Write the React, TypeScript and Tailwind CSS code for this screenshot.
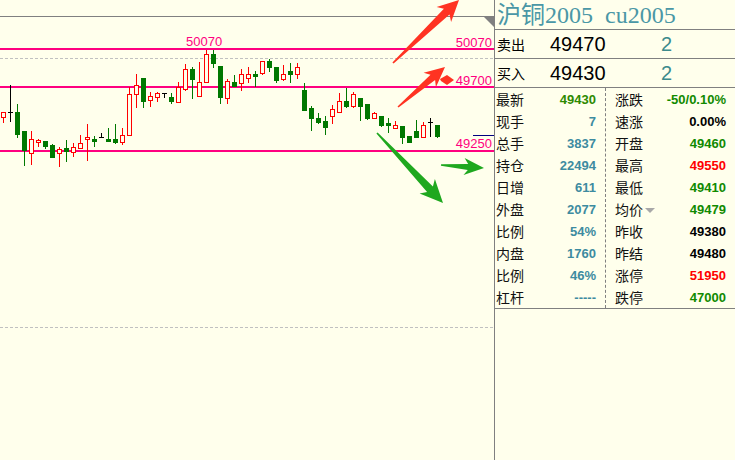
import React from "react";

type Kind = "r" | "g" | "k";
// [high, low, bodyTop, bodyBottom, kind] in chart pixel rows
type Candle = [number, number, number, number, Kind];

const candles: Candle[] = [
  [112, 122, 112, 117, "r"],
  [85, 121, 112, 112, "k"],
  [104, 137, 112, 134, "g"],
  [131, 165, 131, 150, "g"],
  [131, 164, 139, 153, "r"],
  [139, 146, 140, 142, "r"],
  [141, 148, 141, 146, "g"],
  [144, 157, 145, 157, "g"],
  [147, 166, 149, 153, "r"],
  [140, 161, 148, 151, "g"],
  [143, 156, 147, 152, "r"],
  [135, 148, 143, 148, "r"],
  [124, 160, 137, 139, "r"],
  [136, 146, 139, 141, "g"],
  [133, 137, 137, 137, "k"],
  [128, 141, 139, 141, "g"],
  [124, 143, 139, 142, "g"],
  [128, 144, 135, 142, "r"],
  [87, 135, 94, 135, "r"],
  [74, 107, 85, 94, "r"],
  [78, 107, 78, 101, "g"],
  [92, 106, 96, 100, "r"],
  [92, 101, 93, 97, "r"],
  [93, 97, 93, 93, "k"],
  [93, 103, 97, 101, "g"],
  [82, 102, 87, 102, "r"],
  [64, 90, 69, 89, "r"],
  [67, 98, 69, 79, "g"],
  [62, 96, 82, 96, "r"],
  [50, 82, 54, 82, "r"],
  [50, 67, 54, 63, "g"],
  [66, 103, 66, 97, "g"],
  [79, 103, 81, 98, "r"],
  [75, 86, 82, 86, "g"],
  [69, 90, 74, 83, "r"],
  [67, 82, 74, 78, "r"],
  [71, 86, 74, 76, "g"],
  [61, 74, 61, 73, "r"],
  [59, 71, 61, 67, "g"],
  [67, 82, 67, 80, "g"],
  [65, 80, 74, 79, "r"],
  [63, 82, 71, 74, "g"],
  [63, 78, 67, 74, "r"],
  [83, 110, 90, 110, "g"],
  [106, 130, 108, 118, "g"],
  [113, 123, 118, 122, "g"],
  [116, 134, 121, 127, "g"],
  [105, 123, 109, 116, "r"],
  [93, 112, 101, 112, "r"],
  [88, 107, 101, 106, "g"],
  [92, 107, 94, 106, "r"],
  [98, 120, 98, 106, "g"],
  [104, 119, 104, 118, "g"],
  [112, 118, 113, 118, "r"],
  [116, 126, 116, 125, "g"],
  [118, 132, 123, 125, "g"],
  [121, 128, 125, 128, "r"],
  [126, 143, 126, 137, "g"],
  [136, 142, 136, 142, "g"],
  [120, 137, 131, 137, "g"],
  [122, 137, 125, 137, "r"],
  [118, 136, 122, 122, "k"],
  [125, 137, 125, 136, "g"],
];

const BG = "#ffffec";
const PINK = "#ff0080";

// tapered hand-drawn style arrow
function arrow(tx: number, ty: number, hx: number, hy: number, headLen: number, headW: number, shaftW: number) {
  const dx = hx - tx;
  const dy = hy - ty;
  const len = Math.hypot(dx, dy);
  const ux = dx / len;
  const uy = dy / len;
  const nx = -uy;
  const ny = ux;
  const bx = hx - ux * headLen;
  const by = hy - uy * headLen;
  const pts = [
    [tx + nx * 0.8, ty + ny * 0.8],
    [bx + nx * shaftW / 2, by + ny * shaftW / 2],
    [bx + nx * headW / 2 - ux * 4, by + ny * headW / 2 - uy * 4],
    [hx, hy],
    [bx - nx * headW / 2 - ux * 4, by - ny * headW / 2 - uy * 4],
    [bx - nx * shaftW / 2, by - ny * shaftW / 2],
    [tx - nx * 0.8, ty - ny * 0.8],
  ];
  return pts.map((p) => p[0].toFixed(1) + "," + p[1].toFixed(1)).join(" ");
}

function CandleMark({ c, i }: { c: Candle; i: number }) {
  const [hi, lo, top, bot, kind] = c;
  const x0 = 1 + 7 * i;
  const cx = x0 + 2.5;
  if (kind === "k") {
    return (
      <g stroke="#000" strokeWidth={1}>
        <line x1={cx} y1={hi} x2={cx} y2={lo + 1} />
        <line x1={x0} y1={top + 0.5} x2={x0 + 5} y2={top + 0.5} />
      </g>
    );
  }
  if (kind === "g") {
    return (
      <g>
        <line x1={cx} y1={hi} x2={cx} y2={lo + 1} stroke="#007800" />
        <rect x={x0} y={top} width={5} height={bot - top + 1} fill="#007800" />
      </g>
    );
  }
  return (
    <g stroke="#ff0000" strokeWidth={1}>
      {hi < top && <line x1={cx} y1={hi} x2={cx} y2={top} />}
      {lo > bot && <line x1={cx} y1={bot + 1} x2={cx} y2={lo + 1} />}
      <rect x={x0 + 0.5} y={top + 0.5} width={4} height={Math.max(bot - top, 1)} fill={BG} />
    </g>
  );
}

function Chart() {
  return (
    <div className="w-[494px] h-full shrink-0">
      <svg width="494" height="460" className="block">
        <rect x="0" y="16" width="484" height="1" fill="#808080" />
        <polygon points="483,16 494,16 494,27" fill="#808080" />
        <line x1="0" y1="58.5" x2="494" y2="58.5" stroke="#c0c0c0" strokeDasharray="3 2" />
        <line x1="0" y1="327.5" x2="494" y2="327.5" stroke="#c0c0c0" strokeDasharray="3 2" />

        <rect x="0" y="48" width="494" height="2" fill={PINK} />
        <rect x="0" y="86" width="494" height="2" fill={PINK} />
        <rect x="0" y="150" width="494" height="2" fill={PINK} />

        {candles.map((c, i) => (
          <CandleMark key={i} c={c} i={i} />
        ))}

        <rect x="473" y="135" width="21" height="1" fill="#000080" />

        <g fill={PINK} fontFamily="'Liberation Sans', Arial, sans-serif" fontSize="13">
          <text x="186" y="45.5">50070</text>
          <text x="492" y="46.5" textAnchor="end">50070</text>
          <text x="492" y="84.5" textAnchor="end">49700</text>
          <text x="492" y="147.5" textAnchor="end">49250</text>
        </g>

        <g fill="#ff3322">
          <polygon points={arrow(393, 63, 459, 0, 17, 21, 8)} />
          <polygon points={arrow(398, 107, 445, 67, 16, 19, 7)} />
          <polygon points="440,79 447,75 454,80 447,85 441,81" />
        </g>
        <g fill="#1fa81f">
          <polygon points={arrow(377, 133, 443, 203, 19, 21, 8)} />
          <polygon points={arrow(441, 165, 484, 168, 16, 17, 6)} />
        </g>
      </svg>
    </div>
  );
}

const TEAL = "text-[#3d8ba0]";
const GREEN = "text-[#118a00]";

const leftRows = [
  { label: "最新", value: "49430", color: "text-[#2e8a00]" },
  { label: "现手", value: "7", color: TEAL },
  { label: "总手", value: "3837", color: TEAL },
  { label: "持仓", value: "22494", color: TEAL },
  { label: "日增", value: "611", color: TEAL },
  { label: "外盘", value: "2077", color: TEAL },
  { label: "比例", value: "54%", color: TEAL },
  { label: "内盘", value: "1760", color: TEAL },
  { label: "比例", value: "46%", color: TEAL },
  { label: "杠杆", value: "-----", color: TEAL },
];

const rightRows = [
  { label: "涨跌", value: "-50/0.10%", color: GREEN },
  { label: "速涨", value: "0.00%", color: "text-black" },
  { label: "开盘", value: "49460", color: GREEN },
  { label: "最高", value: "49550", color: "text-[#ff0000]" },
  { label: "最低", value: "49410", color: GREEN },
  { label: "均价", value: "49479", color: GREEN, caret: true },
  { label: "昨收", value: "49380", color: "text-black" },
  { label: "昨结", value: "49480", color: "text-black" },
  { label: "涨停", value: "51950", color: "text-[#ff0000]" },
  { label: "跌停", value: "47000", color: GREEN },
];

const cjk = "font-['Noto_Sans_CJK_SC',sans-serif]";
const num = "font-['Liberation_Sans',Arial,sans-serif]";

function QuotePanel() {
  return (
    <div className="w-[241px] h-full border-l border-[#808080] flex flex-col">
      <div className="h-[30px] border-b border-[#808080] flex items-center pl-[2px] text-[24px] leading-none text-[#4a97a6] font-['Liberation_Serif','Noto_Sans_CJK_SC',serif] whitespace-pre">
        沪铜2005  cu2005
      </div>
      <div className="h-[29px] border-b border-[#808080] flex items-center">
        <span className={`w-[55px] pl-[2px] text-[14px] text-black ${cjk}`}>卖出</span>
        <span className={`w-[111px] text-[20px] text-black ${num}`}>49470</span>
        <span className={`text-[20px] text-[#3d8b8c] ${num}`}>2</span>
      </div>
      <div className="h-[29px] border-b border-[#808080] flex items-center">
        <span className={`w-[55px] pl-[2px] text-[14px] text-black ${cjk}`}>买入</span>
        <span className={`w-[111px] text-[20px] text-black ${num}`}>49430</span>
        <span className={`text-[20px] text-[#3d8b8c] ${num}`}>2</span>
      </div>
      <div className="h-[221px] border-b border-[#808080] flex">
        <div className="w-[111px] border-r border-dashed border-[#808080] flex flex-col">
          {leftRows.map((r, i) => (
            <div key={i} className="h-[22px] flex items-center justify-between pl-[1px] pr-[9px]">
              <span className={`text-[14px] leading-none text-[#111] ${cjk}`}>{r.label}</span>
              <span className={`text-[13px] font-bold leading-none ${r.color} ${num}`}>{r.value}</span>
            </div>
          ))}
        </div>
        <div className="flex-1 flex flex-col">
          {rightRows.map((r, i) => (
            <div key={i} className="h-[22px] flex items-center justify-between pl-[9px] pr-[9px]">
              <span className={`flex items-center text-[14px] leading-none text-[#111] ${cjk}`}>
                {r.label}
                {r.caret && (
                  <svg width="10" height="6" className="ml-[2px] mt-[3px]">
                    <polygon points="0,0 10,0 5,5" fill="#a8a8a8" />
                  </svg>
                )}
              </span>
              <span className={`text-[13px] font-bold leading-none ${r.color} ${num}`}>{r.value}</span>
            </div>
          ))}
        </div>
      </div>
    </div>
  );
}

export default function App() {
  return (
    <div className="w-[735px] h-[460px] bg-[#ffffec] flex overflow-hidden">
      <Chart />
      <QuotePanel />
    </div>
  );
}
